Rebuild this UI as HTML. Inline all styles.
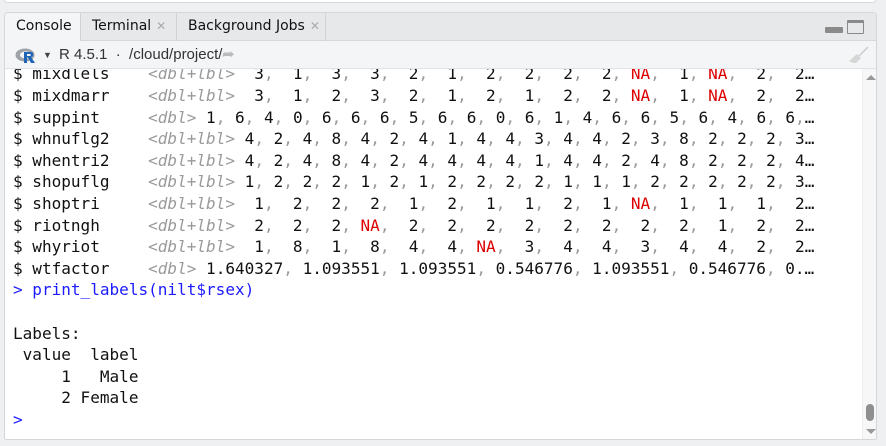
<!DOCTYPE html>
<html><head><meta charset="utf-8"><style>
*{margin:0;padding:0;box-sizing:border-box}
body{width:886px;height:446px;background:#eef0f2;position:relative;overflow:hidden;font-family:"DejaVu Sans","Liberation Sans",sans-serif}
.top{position:absolute;left:4px;top:-4px;width:872px;height:7px;background:#fff;border:1px solid #d4d6d8;border-top:none;border-radius:0 0 3px 3px}
.panel{position:absolute;left:4px;top:12px;width:873px;height:428px;border:1px solid #d4d6d8;border-radius:4px 4px 2px 2px;background:#fff;overflow:hidden}
.tabs{position:absolute;left:0;top:0;width:100%;height:28px;background:#e6e8ea;border-bottom:1px solid #d6d8da}
.tab{position:absolute;top:0;height:28px;font-size:14px;color:#111;line-height:27px;border-right:1px solid #d0d2d4;padding-left:11px;font-weight:500}
.tab .x{color:#aaa;font-size:12px;margin-left:5px}
.bar{position:absolute;left:0;top:28px;width:100%;height:28px;background:#f4f5f6;border-bottom:1px solid #e0e2e4;font-size:15px;color:#333;line-height:28px;font-family:"Liberation Sans",sans-serif}
.con{position:absolute;left:0;top:56px;width:857px;height:372px;overflow:hidden;background:#fff}
pre{position:absolute;left:8px;top:-5.6px;font-family:"DejaVu Sans Mono",monospace;font-size:16.05px;line-height:21.6px;color:#111}
i{color:#9a9a9a;font-style:italic}
b{font-weight:normal;color:#9a9a9a}
s{text-decoration:none;color:#d00}
u{text-decoration:none;color:#1c1cff}
.sb{position:absolute;left:857px;top:56px;width:14px;height:372px;background:#f7f7f7;border-left:1px solid #eee}
</style></head><body>
<div class="top"></div>
<div class="panel">
 <div class="tabs">
  <div class="tab" style="left:0;width:76px;background:#f4f5f6;height:29px">Console</div>
  <div class="tab" style="left:76px;width:96px">Terminal<span class="x">✕</span></div>
  <div class="tab" style="left:172px;width:149px">Background Jobs<span class="x">✕</span></div>
  <div style="position:absolute;left:820px;top:14px;width:18px;height:6px;background:#8a8a8a;border-radius:1px"></div>
  <div style="position:absolute;left:842px;top:7px;width:17px;height:14px;border:1.5px solid #8a8a8a;border-top:3px solid #8a8a8a;border-radius:1px"></div>
 </div>
 <div class="bar">
  <svg style="position:absolute;left:10px;top:6px" width="24" height="18" viewBox="0 0 24 18"><ellipse cx="10" cy="8" rx="9.5" ry="6.5" fill="#9ea3a8"/><ellipse cx="11" cy="8" rx="6" ry="3.6" fill="#f4f5f6"/><path d="M9 5h7c3 0 3 5 0 5l4 6h-4l-3-5.5h-1V16H9z" fill="#1f65b7"/><path d="M12 7h3c1 0 1 2 0 2h-3z" fill="#f4f5f6"/></svg>
  <span style="position:absolute;left:38px;top:0;font-size:9px;color:#444">▼</span>
  <span style="position:absolute;left:54px;top:0">R 4.5.1 &nbsp;·&nbsp; /cloud/project/</span>
  <span style="position:absolute;left:217px;top:0;color:#bbb">➦</span>
  <svg style="position:absolute;left:843px;top:4px" width="22" height="20" viewBox="0 0 22 20"><path d="M20 2L11 11" stroke="#ccc" stroke-width="1.5"/><path d="M9 9l4 4-5 5c-3 0-6-1-7-2 2-1 4-4 8-7z" fill="#d6d6d6"/></svg>
 </div>
 <div class="con"><pre>$ mixdlels    <i>&lt;dbl+lbl&gt;</i>  3<b>,</b>  1<b>,</b>  3<b>,</b>  3<b>,</b>  2<b>,</b>  1<b>,</b>  2<b>,</b>  2<b>,</b>  2<b>,</b>  2<b>,</b> <s>NA</s><b>,</b>  1<b>,</b> <s>NA</s><b>,</b>  2<b>,</b>  2…
$ mixdmarr    <i>&lt;dbl+lbl&gt;</i>  3<b>,</b>  1<b>,</b>  2<b>,</b>  3<b>,</b>  2<b>,</b>  1<b>,</b>  2<b>,</b>  1<b>,</b>  2<b>,</b>  2<b>,</b> <s>NA</s><b>,</b>  1<b>,</b> <s>NA</s><b>,</b>  2<b>,</b>  2…
$ suppint     <i>&lt;dbl&gt;</i> 1<b>,</b> 6<b>,</b> 4<b>,</b> 0<b>,</b> 6<b>,</b> 6<b>,</b> 6<b>,</b> 5<b>,</b> 6<b>,</b> 6<b>,</b> 0<b>,</b> 6<b>,</b> 1<b>,</b> 4<b>,</b> 6<b>,</b> 6<b>,</b> 5<b>,</b> 6<b>,</b> 4<b>,</b> 6<b>,</b> 6<b>,</b>…
$ whnuflg2    <i>&lt;dbl+lbl&gt;</i> 4<b>,</b> 2<b>,</b> 4<b>,</b> 8<b>,</b> 4<b>,</b> 2<b>,</b> 4<b>,</b> 1<b>,</b> 4<b>,</b> 4<b>,</b> 3<b>,</b> 4<b>,</b> 4<b>,</b> 2<b>,</b> 3<b>,</b> 8<b>,</b> 2<b>,</b> 2<b>,</b> 2<b>,</b> 3…
$ whentri2    <i>&lt;dbl+lbl&gt;</i> 4<b>,</b> 2<b>,</b> 4<b>,</b> 8<b>,</b> 4<b>,</b> 2<b>,</b> 4<b>,</b> 4<b>,</b> 4<b>,</b> 4<b>,</b> 1<b>,</b> 4<b>,</b> 4<b>,</b> 2<b>,</b> 4<b>,</b> 8<b>,</b> 2<b>,</b> 2<b>,</b> 2<b>,</b> 4…
$ shopuflg    <i>&lt;dbl+lbl&gt;</i> 1<b>,</b> 2<b>,</b> 2<b>,</b> 2<b>,</b> 1<b>,</b> 2<b>,</b> 1<b>,</b> 2<b>,</b> 2<b>,</b> 2<b>,</b> 2<b>,</b> 1<b>,</b> 1<b>,</b> 1<b>,</b> 2<b>,</b> 2<b>,</b> 2<b>,</b> 2<b>,</b> 2<b>,</b> 3…
$ shoptri     <i>&lt;dbl+lbl&gt;</i>  1<b>,</b>  2<b>,</b>  2<b>,</b>  2<b>,</b>  1<b>,</b>  2<b>,</b>  1<b>,</b>  1<b>,</b>  2<b>,</b>  1<b>,</b> <s>NA</s><b>,</b>  1<b>,</b>  1<b>,</b>  1<b>,</b>  2…
$ riotngh     <i>&lt;dbl+lbl&gt;</i>  2<b>,</b>  2<b>,</b>  2<b>,</b> <s>NA</s><b>,</b>  2<b>,</b>  2<b>,</b>  2<b>,</b>  2<b>,</b>  2<b>,</b>  2<b>,</b>  2<b>,</b>  2<b>,</b>  1<b>,</b>  2<b>,</b>  2…
$ whyriot     <i>&lt;dbl+lbl&gt;</i>  1<b>,</b>  8<b>,</b>  1<b>,</b>  8<b>,</b>  4<b>,</b>  4<b>,</b> <s>NA</s><b>,</b>  3<b>,</b>  4<b>,</b>  4<b>,</b>  3<b>,</b>  4<b>,</b>  4<b>,</b>  2<b>,</b>  2…
$ wtfactor    <i>&lt;dbl&gt;</i> 1.640327<b>,</b> 1.093551<b>,</b> 1.093551<b>,</b> 0.546776<b>,</b> 1.093551<b>,</b> 0.546776<b>,</b> 0.…
<u>&gt; print_labels(nilt$rsex)</u>

Labels:
 value  label
     1   Male
     2 Female
<u>&gt;</u></pre></div>
 <div class="sb">
  <div style="position:absolute;left:3px;top:6px;width:0;height:0;border-left:5px solid transparent;border-right:5px solid transparent;border-bottom:5px solid #999"></div>
  <div style="position:absolute;left:3px;top:335px;width:8px;height:17px;background:#8f8f8f;border-radius:4px"></div>
  <div style="position:absolute;left:3px;top:360px;width:0;height:0;border-left:5px solid transparent;border-right:5px solid transparent;border-top:5px solid #999"></div>
 </div>
</div>
</body></html>
